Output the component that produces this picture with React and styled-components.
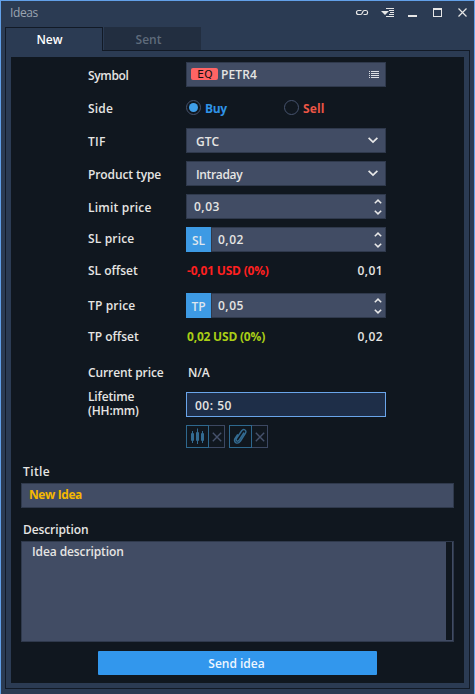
import React from 'react';
import styled, { createGlobalStyle, css } from 'styled-components';

const c = {
  chrome: '#2b3b53',
  line: '#121a26',
  dark: '#10171f',
  field: '#414c64',
  fieldBorder: '#2f394c',
  text: '#e6e5e3',
  accent: '#3d9ae4',
};

const Global = createGlobalStyle`
  *, *::before, *::after { box-sizing: border-box; }
  body { margin: 0; background: ${c.chrome}; }
  svg { display: block; flex: none; }
`;

const Window = styled.div`
  width: 475px;
  height: 694px;
  display: flex;
  flex-direction: column;
  background: ${c.chrome};
  border: 1px solid #62a0e8;
  border-bottom: 0;
  padding: 0 4px 5px;
  font: 600 12px 'Open Sans', sans-serif;
  color: ${c.text};
  overflow: hidden;
`;

const Text = styled.span`
  display: block;
  line-height: 25px;
  white-space: nowrap;
  color: ${p => p.$color || 'inherit'};
  letter-spacing: ${p => p.$ls || 0}px;
  margin-top: ${p => p.$dy || 0}px;
`;

const Delta = styled(Text)`
  font-weight: 700;
`;

const TitleBar = styled.header`
  height: 26px;
  flex: none;
  display: flex;
  justify-content: space-between;
  padding: 0 2px 0 5px;
`;

const WindowTitle = styled(Text)`
  font-weight: 500;
  color: #9ba4b1;
  margin-top: -1px;
`;

const Controls = styled.div`
  display: flex;
  align-items: flex-start;
  padding-top: 6px;
`;

const Tabs = styled.nav`
  display: flex;
  height: 23px;
  flex: none;
`;

const Tab = styled.button`
  width: 97px;
  height: 23px;
  margin: 0 0 0 1px;
  padding: 0 8px 0 0;
  display: flex;
  justify-content: center;
  font: inherit;
  border: 0;
  background: #222e40;
  color: #5f6b7b;
  ${p => p.$active && css`
    width: 98px;
    margin-left: 0;
    background: ${c.chrome};
    color: #fff;
    border: 1px solid ${c.line};
    border-bottom: 0;
    padding-right: 9px;
  `}
`;

const Frame = styled.div`
  flex: 1;
  min-height: 0;
  display: flex;
  border: 1px solid ${c.line};
  border-top: 0;
  padding: 0 5px 5px;
`;

const FrameTop = styled.div`
  height: 7px;
  flex: none;
  display: flex;
  border-left: 1px solid ${c.line};
  border-right: 1px solid ${c.line};
  &::before { content: ''; width: 96px; }
  &::after { content: ''; flex: 1; height: 1px; background: ${c.line}; }
`;

const Panel = styled.main`
  flex: 1;
  display: flex;
  flex-direction: column;
  background: ${c.dark};
  padding: 5px 10px 0;
`;

const Row = styled.div`
  height: ${p => p.$h || 33}px;
  flex: none;
  display: grid;
  grid-template-columns: 98px 200px;
  align-items: start;
  margin-left: 67px;
`;

const TwoLines = styled(Text)`
  line-height: 14px;
  white-space: pre-line;
`;

const Field = styled.div`
  height: 25px;
  flex: 1;
  display: flex;
  justify-content: space-between;
  background: ${c.field};
  border: 1px solid ${c.fieldBorder};
  padding: 0 ${p => p.$pr || 7}px 0 ${p => p.$pl || 9}px;
  margin-top: ${p => p.$mt || 0}px;
  ${Text} { line-height: 23px; }
  ${p => p.$focus && css`
    background: #1e2e48;
    border-color: #6aa5ea;
  `}
`;

const Group = styled.div`
  display: flex;
`;

const Prefix = styled.button`
  width: 25px;
  height: 25px;
  border: 0;
  padding: 0;
  display: flex;
  justify-content: center;
  background: ${c.accent};
  color: #dfe6ee;
  font: inherit;
`;

const Badge = styled.span`
  width: 27px;
  height: 12px;
  margin: 5px 3px 0 0;
  padding-left: 1px;
  border-radius: 2px;
  background: #ff6464;
  color: #111;
  font: 10.5px/13px 'DejaVu Sans', sans-serif;
  letter-spacing: 0.3px;
  text-align: center;
`;

const Spinner = styled.div`
  display: flex;
  flex-direction: column;
  gap: 6px;
  padding-top: 4px;
`;

const Choices = styled.div`
  display: grid;
  grid-template-columns: 98px 102px;
`;

const Choice = styled.label`
  display: flex;
  gap: 4px;
`;

const Radio = styled.span`
  width: 15px;
  height: 15px;
  margin-top: 5px;
  border: 1px solid #46536e;
  border-radius: 50%;
  display: grid;
  place-items: center;
  &::after {
    content: '';
    width: 9px;
    height: 9px;
    border-radius: 50%;
    background: ${p => (p.$on ? '#3f9fea' : 'transparent')};
  }
`;

const Offset = styled.div`
  display: flex;
  justify-content: space-between;
  padding: 0 3px 0 ${p => p.$pl || 1}px;
`;

const Attachments = styled.div`
  height: 34px;
  flex: none;
  display: flex;
  gap: 4px;
  margin-left: 165px;
`;

const Split = styled.div`
  display: flex;
  height: 23px;
`;

const IconButton = styled.button`
  width: ${p => (p.$muted ? 16 : 23)}px;
  height: 23px;
  padding: 0;
  display: grid;
  place-items: center;
  background: transparent;
  border: 1px solid ${p => (p.$muted ? '#3c4862' : '#2e688e')};
  border-left-width: ${p => (p.$muted ? 0 : 1)}px;
  color: ${p => (p.$muted ? '#46526c' : '#336b92')};
`;

const Caption = styled(Text)`
  height: ${p => p.$h}px;
  flex: none;
  padding-left: 2px;
`;

const TitleField = styled(Field)`
  flex: none;
  width: 433px;
  margin-bottom: 9px;
`;

const TextArea = styled.div`
  width: 433px;
  height: 101px;
  flex: none;
  display: flex;
  justify-content: space-between;
  background: ${c.field};
  border: 1px solid ${c.fieldBorder};
  padding: 0 1px 1px 10px;
`;

const ScrollTrack = styled.div`
  width: 6px;
  background: ${c.dark};
`;

const Send = styled.button`
  width: 279px;
  height: 24px;
  flex: none;
  margin: 9px 0 0 77px;
  padding: 0 2px 0 0;
  border: 0;
  border-radius: 1px;
  display: flex;
  justify-content: center;
  background: #3297ed;
  color: #eef6ff;
  font: inherit;
`;

const WindowIcons = () => (
  <svg width="113" height="12" viewBox="355 7 113 12" fill="none" stroke="#e6e6e6" shapeRendering="crispEdges">
    <g shapeRendering="auto" strokeWidth="1.2">
      <path d="M361.5 10.5H358.5Q356.5 10.5 356.5 12.5T358.5 14.5H360.5Q362 14.5 362.5 12.5T364.5 10.5H366Q367.6 10.5 367.6 12.5T366 14.5H363.5" />
    </g>
    <path d="M386 8.5H394M389 10.5H394M390 12.5H394M389 14.5H394M386 16.5H394" />
    <path d="M381 11H389L385 15Z" fill="#e6e6e6" stroke="none" shapeRendering="auto" />
    <path d="M408 16H417" strokeWidth="2" />
    <path d="M433.5 8.5H441.5V16.5H433.5ZM433 9.5H442" />
    <path d="M458.5 8.5L466.5 16.5M466.5 8.5L458.5 16.5" shapeRendering="auto" strokeWidth="1.2" />
  </svg>
);

const ListIcon = () => (
  <svg width="10" height="20" viewBox="0 0 10 20" stroke="#dcdfe5" shapeRendering="crispEdges">
    <path d="M0 8.5H1M2 8.5H10M0 10.5H1M2 10.5H10M0 12.5H1M2 12.5H10M0 14.5H1M2 14.5H10" />
  </svg>
);

const Chevron = () => (
  <svg width="10" height="20" viewBox="0 0 10 20" fill="none" stroke="#e8e8e8" strokeWidth="1.7">
    <path d="M0.6 8.8L5 13L9.4 8.8" />
  </svg>
);

const Arrow = ({ up }) => (
  <svg width="8" height="5" viewBox="0 0 8 5" fill="none" stroke="#e8e8e8" strokeWidth="1.5">
    <path d={up ? 'M0.8 4.3L4 1.1L7.2 4.3' : 'M0.8 0.7L4 3.9L7.2 0.7'} />
  </svg>
);

const Candles = () => (
  <svg width="15" height="17" viewBox="0 0 15 17" fill="currentColor">
    <path d="M2 3h1v12h-1zM7 0.5h1v15.5h-1zM12 3h1v12h-1z" />
    <rect x="1" y="5" width="3" height="8" rx="1" />
    <rect x="6" y="4" width="3" height="9" rx="1" />
    <rect x="11" y="5" width="3" height="8" rx="1" />
  </svg>
);

const Clip = () => (
  <svg width="15" height="17" viewBox="0 0 15 17" fill="none" stroke="currentColor" strokeWidth="1.4" strokeLinecap="round">
    <path d="M10.8 5L6 12.3Q4.6 13.8 3.6 12.8T3.8 10L8.5 3Q10.2 0.8 12 2T12.2 5.6L7.5 13Q5.2 16 3 14.8T1.8 10.8L4.4 6.8" />
  </svg>
);

const Cross = () => (
  <svg width="10" height="10" viewBox="0 0 10 10" fill="none" stroke="currentColor" strokeWidth="1.4">
    <path d="M0.8 0.8L9.2 9.2M9.2 0.8L0.8 9.2" />
  </svg>
);

const Select = ({ children, ls }) => (
  <Field>
    <Text $dy={1} $ls={ls}>{children}</Text>
    <Chevron />
  </Field>
);

const NumberField = ({ children, pl = 7 }) => (
  <Field $pl={pl} $pr={3}>
    <Text $ls={0.5}>{children}</Text>
    <Spinner><Arrow up /><Arrow /></Spinner>
  </Field>
);

const PrefixedField = ({ prefix, children }) => (
  <Group>
    <Prefix><Text $dy={1}>{prefix}</Text></Prefix>
    <NumberField pl={6}>{children}</NumberField>
  </Group>
);

const Attachment = ({ children }) => (
  <Split>
    <IconButton>{children}</IconButton>
    <IconButton $muted><Cross /></IconButton>
  </Split>
);

export default function App() {
  return (
    <Window>
      <Global />
      <TitleBar>
        <WindowTitle $ls={-0.4}>Ideas</WindowTitle>
        <Controls><WindowIcons /></Controls>
      </TitleBar>
      <Tabs>
        <Tab $active><Text $dy={-1}>New</Text></Tab>
        <Tab><Text>Sent</Text></Tab>
      </Tabs>
      <FrameTop />
      <Frame>
        <Panel>
          <Row>
            <Text $dy={1} $ls={-0.35}>Symbol</Text>
            <Field $pl={4} $pr={6}>
              <Group>
                <Badge>EQ</Badge>
                <Text $ls={0.1}>PETR4</Text>
              </Group>
              <ListIcon />
            </Field>
          </Row>
          <Row>
            <Text $dy={1} $ls={0.2}>Side</Text>
            <Choices>
              <Choice><Radio $on /><Delta $dy={1} $ls={-0.4} $color="#2f93e6">Buy</Delta></Choice>
              <Choice><Radio /><Delta $dy={1} $ls={0.1} $color="#ea5545">Sell</Delta></Choice>
            </Choices>
          </Row>
          <Row>
            <Text $dy={1} $ls={0.3}>TIF</Text>
            <Select>GTC</Select>
          </Row>
          <Row>
            <Text $dy={1} $ls={-0.1}>Product type</Text>
            <Select ls={-0.35}>Intraday</Select>
          </Row>
          <Row>
            <Text $dy={1} $ls={0.2}>Limit price</Text>
            <NumberField>0,03</NumberField>
          </Row>
          <Row $h={31}>
            <Text $dy={-1} $ls={0.15}>SL price</Text>
            <PrefixedField prefix="SL">0,02</PrefixedField>
          </Row>
          <Row $h={35}>
            <Text>SL offset</Text>
            <Offset>
              <Delta $color="#ff2020" $ls={-0.2}>-0,01 USD (0%)</Delta>
              <Text $ls={0.4}>0,01</Text>
            </Offset>
          </Row>
          <Row $h={31}>
            <Text $ls={0.15}>TP price</Text>
            <PrefixedField prefix="TP">0,05</PrefixedField>
          </Row>
          <Row $h={36}>
            <Text>TP offset</Text>
            <Offset>
              <Delta $color="#a9ce16" $ls={-0.2}>0,02 USD (0%)</Delta>
              <Text $ls={0.4}>0,02</Text>
            </Offset>
          </Row>
          <Row $h={30}>
            <Text $ls={-0.1}>Current price</Text>
            <Offset $pl={2}><Text $ls={-0.2}>N/A</Text></Offset>
          </Row>
          <Row $h={35}>
            <TwoLines $ls={-0.15}>{'Lifetime\n(HH:mm)'}</TwoLines>
            <Field $focus $mt={2} $pl={8}><Text $dy={1} $ls={0.5}>00: 50</Text></Field>
          </Row>
          <Attachments>
            <Attachment><Candles /></Attachment>
            <Attachment><Clip /></Attachment>
          </Attachments>
          <Caption $h={24} $ls={0.4}>Title</Caption>
          <TitleField $pl={7}><Delta $dy={-1} $ls={-0.4} $color="#f5b800">New Idea</Delta></TitleField>
          <Caption $h={24} $ls={-0.1}>Description</Caption>
          <TextArea>
            <Text $dy={-3} $ls={-0.1}>Idea description</Text>
            <ScrollTrack />
          </TextArea>
          <Send><Text>Send idea</Text></Send>
        </Panel>
      </Frame>
    </Window>
  );
}
